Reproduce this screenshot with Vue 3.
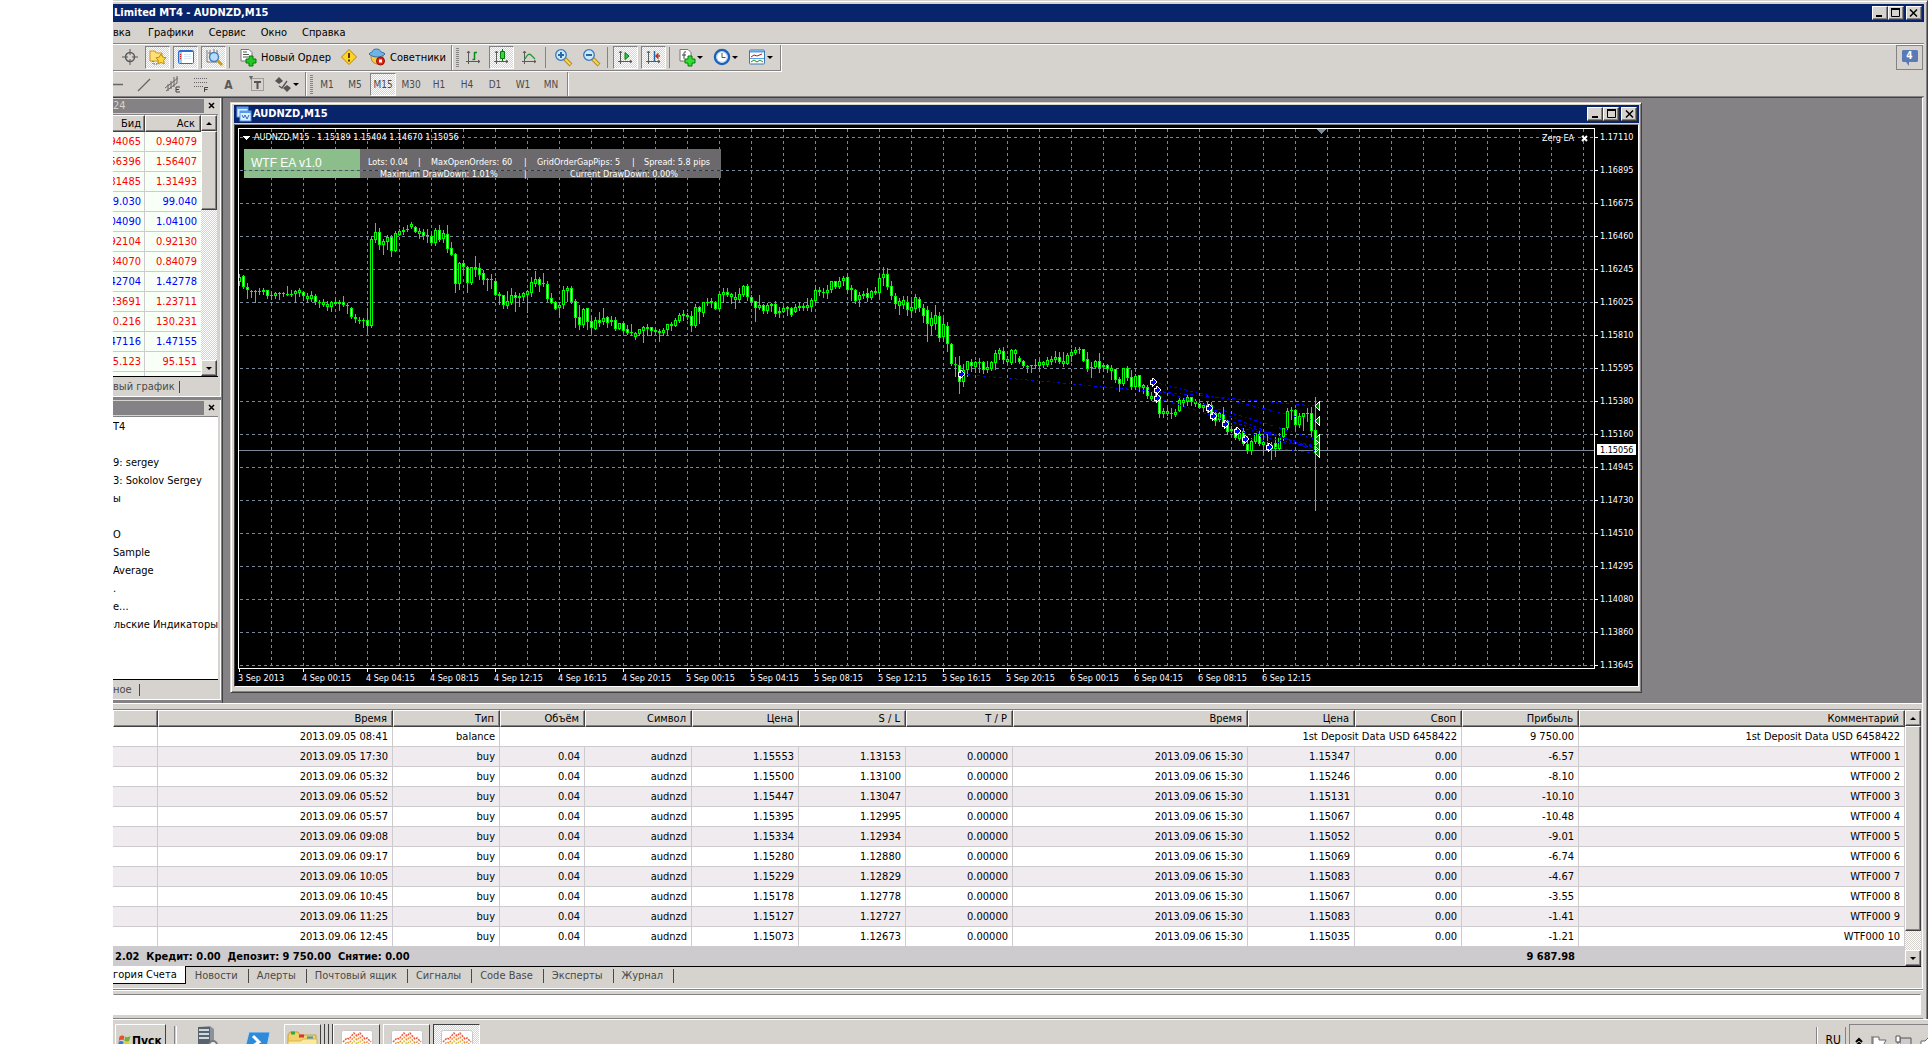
<script setup>
import { ref } from "vue"

// 16x16 toolbar glyphs
const axes = '<path d="M3.5 2v13M1 12.500h14M2 4l1.500-2L5 4M13 11l2 1.500-2 1.500" fill="none" stroke="#5a5a5a"/>'
const icons = {
  cross: '<circle cx="8" cy="8" r="4.500" fill="none" stroke="#5a5a5a" stroke-width="1.500"/><path d="M8 0v6M8 10v6M0 8h6M10 8h6" stroke="#5a5a5a"/>',
  star: '<path d="M0 2h5l1 2h6v8H0z" fill="#ffe07a" stroke="#c39a20"/><path d="M3 12v3h4" stroke="#555" fill="none" stroke-dasharray="1 1"/><path d="M11 5l1.800 3.200 3.200.6-2.300 2.500.5 3.700-3.200-1.500L7.800 15l.5-3.700L6 8.800l3.200-.6z" fill="#ffd83c" stroke="#c08a10"/>',
  panel: '<rect x=".5" y="1.500" width="15" height="13" rx="1" fill="#fff" stroke="#2a70c8"/><path d="M1 2h3v12H1z" fill="#9cc8f4"/><path d="M1 2.500h14" stroke="#2a70c8"/><path d="M2 5.500h1M2 7.500h1M2 9.500h1" stroke="#c02020"/><path d="M6 5.500h7M6 7.500h7M6 9.500h7" stroke="#d7e5f4"/>',
  search: '<path d="M1 1v12h10V1M4 1v5M8 0v5M2 4h3" fill="#f4f0e8" stroke="#777"/><circle cx="8" cy="8" r="4.500" fill="#b8ddf8" stroke="#4580bd" stroke-width="1.500"/><path d="M11.500 11.500L16 16" stroke="#c99e25" stroke-width="3"/>',
  order: '<path d="M1 .5h8l3 3V12H1z" fill="#fff" stroke="#777"/><path d="M3 3h4M3 5.500h6M3 8h5" stroke="#555"/><path d="M9 7h4v3h3v4h-3v3H9v-3H6v-4h3z" fill="#20c820" stroke="#08780c"/>',
  warn: '<path d="M8 .5L15.500 8 8 15.500.5 8z" fill="#ffd42a" stroke="#b98500"/><path d="M8 4v5M8 10.500v2" stroke="#5b3c00" stroke-width="2"/>',
  robot: '<path d="M2 6c0 5 1 8 6 9 4-1 6-4 6-9-3 2-9 2-12 0z" fill="#f5c945" stroke="#b98a15"/><path d="M0 5c1-2 3-1 3-2 1-4 8-4 9 0 1 1 3 0 4 2-3 4-12 4-16 0z" fill="#6fb4e6" stroke="#3173ad"/><circle cx="11.500" cy="12" r="4" fill="#dd2617" stroke="#8f1009"/><path d="M10 10.500h3v3h-3z" fill="#fff"/>',
  bars: axes + '<path d="M9.500 3v8M9.500 3.500H12M7.500 10.500h2" fill="none" stroke="#0a8a1a" stroke-width="1.500"/>',
  candle: axes + '<path d="M9.500 0v12" stroke="#08780c"/><path d="M7.500 2.500h4v7h-4z" fill="#30d848" stroke="#08780c"/>',
  line: axes + '<path d="M4 10c2-4 4-6 6-4l4 4" fill="none" stroke="#259a30" stroke-width="1.300"/>',
  zoomIn: '<path d="M10 10l6 6" stroke="#b48a1e" stroke-width="4"/><path d="M10 10l5.500 5.500" stroke="#f4d860" stroke-width="2"/><circle cx="6" cy="6" r="5.300" fill="#cdeafc" stroke="#3a78b8" stroke-width="1.300"/><path d="M3 6h6M6 3v6" stroke="#2b68a8" stroke-width="2"/>',
  zoomOut: '<path d="M10 10l6 6" stroke="#b48a1e" stroke-width="4"/><path d="M10 10l5.500 5.500" stroke="#f4d860" stroke-width="2"/><circle cx="6" cy="6" r="5.300" fill="#cdeafc" stroke="#3a78b8" stroke-width="1.300"/><path d="M3 6h6" stroke="#2b68a8" stroke-width="2"/>',
  scroll: axes + '<path d="M8 3.500v7L12 7z" fill="#30c840" stroke="#08780c"/>',
  shift: axes + '<path d="M9.500 2v10" stroke="#2268a8" stroke-width="1.500"/><path d="M11 7h4M13.500 4.500L11 7l2.500 2.500" fill="none" stroke="#b8341a" stroke-width="1.500"/>',
  addDoc: '<path d="M1 .5h8l3 3V12H1z" fill="#fff" stroke="#777"/><path d="M7 3c-2-1-2 1-2 2v5M3 6h4" fill="none" stroke="#444"/><path d="M9 7h4v3h3v4h-3v3H9v-3H6v-4h3z" fill="#30e030" stroke="#08780c"/>',
  clock: '<circle cx="8" cy="8" r="7" fill="#fff" stroke="#1d62b8" stroke-width="2.500"/><circle cx="8" cy="8" r="5.300" fill="none" stroke="#a6cdf0"/><path d="M8 4v4.500h3.500" fill="none" stroke="#555"/>',
  template: '<rect x=".5" y="1" width="15" height="14" rx="1" fill="#fff" stroke="#3a78b8"/><path d="M1 2.500h14" stroke="#5aa0e0" stroke-width="2"/><path d="M2 8l3-2 3 1 5-2" fill="none" stroke="#a82020"/><path d="M1 9.500h14" stroke="#5aa0e0"/><path d="M2 13l3-2 3 2 3-2 3 2" fill="none" stroke="#18902a"/>',
  hline: '<path d="M0 8.500h14" stroke="#666" stroke-width="1.500"/>',
  slash: '<path d="M1 15L13 3" stroke="#666" stroke-width="1.300"/>',
  channel: '<path d="M0 12L13 2M1 15L12 7M3 8v7M6 5v8M9 1v10M12 0v7" stroke="#666" fill="none"/><path d="M15 11h-4v5h4M11 13.500h3" stroke="#444" fill="none"/>',
  fibo: '<path d="M1 2.500h13M1 6.500h13M1 10.500h9" stroke="#666" stroke-dasharray="1 1"/><path d="M11.500 16v-4.500H15M11.500 13.500h3" stroke="#444" fill="none"/>',
  frame: '<rect x="2.500" y="2.500" width="12" height="12" fill="none" stroke="#666" stroke-dasharray="1 1"/><path d="M0 0h4L2 4z" fill="#666"/><path d="M5 6h7M8.500 6v7" stroke="#555" stroke-width="2"/>',
  arrows: '<path d="M4 1l4 4-4 3-4-3zM12 9l4 3-4 4-4-4z" fill="#555"/><path d="M4 10l3 2 5-7" fill="none" stroke="#555" stroke-width="1.300"/>',
}

const menu = ["Графики", "Сервис", "Окно", "Справка"]
const standardBar = [
  { icon: "cross" },
  { icon: "star", on: true },
  { icon: "panel", on: true },
  { icon: "search", on: true },
  { sep: true },
  { icon: "order", label: "Новый Ордер" },
  { icon: "warn" },
  { icon: "robot", label: "Советники" },
]
const chartBar = [
  { icon: "bars" },
  { icon: "candle", on: true },
  { icon: "line" },
  { sep: true },
  { icon: "zoomIn" },
  { icon: "zoomOut" },
  { sep: true },
  { icon: "scroll", on: true },
  { icon: "shift", on: true },
  { sep: true },
  { icon: "addDoc", drop: true },
  { icon: "clock", drop: true },
  { icon: "template", drop: true },
]
const drawBar = [
  { icon: "hline" }, { icon: "slash" }, { icon: "channel" }, { icon: "fibo" },
  { letter: "A" }, { icon: "frame" }, { icon: "arrows", drop: true },
]
const frames = ["M1", "M5", "M15", "M30", "H1", "H4", "D1", "W1", "MN"]
const frame = ref("M15")

// Market watch: bid, ask, direction
const quotes = [
  ["94065", "0.94079", "down"], ["56396", "1.56407", "down"], ["31485", "1.31493", "down"],
  ["9.030", "99.040", "up"], ["04090", "1.04100", "up"], ["92104", "0.92130", "down"],
  ["84070", "0.84079", "down"], ["42704", "1.42778", "up"], ["23691", "1.23711", "down"],
  ["0.216", "130.231", "down"], ["47116", "1.47155", "up"], ["5.123", "95.151", "down"],
  ["", "", "up"],
]
const navigator = ["T4", "", "9: sergey", "3: Sokolov Sergey", "ы", "", "O", "Sample", "Average", ".", "е...", "ельские Индикаторы"]

// Account history
const columns = ["", "Время", "Тип", "Объём", "Символ", "Цена", "S / L", "T / P", "Время", "Цена", "Своп", "Прибыль", "Комментарий"]
const deals = [
  { open: "2013.09.05 17:30", price: "1.15553", sl: "1.13153", close: "1.15347", profit: "-6.57", bar: 961 },
  { open: "2013.09.06 05:32", price: "1.15500", sl: "1.13100", close: "1.15246", profit: "-8.10", bar: 1153 },
  { open: "2013.09.06 05:52", price: "1.15447", sl: "1.13047", close: "1.15131", profit: "-10.10", bar: 1157 },
  { open: "2013.09.06 05:57", price: "1.15395", sl: "1.12995", close: "1.15067", profit: "-10.48", bar: 1157 },
  { open: "2013.09.06 09:08", price: "1.15334", sl: "1.12934", close: "1.15052", profit: "-9.01", bar: 1209 },
  { open: "2013.09.06 09:17", price: "1.15280", sl: "1.12880", close: "1.15069", profit: "-6.74", bar: 1213 },
  { open: "2013.09.06 10:05", price: "1.15229", sl: "1.12829", close: "1.15083", profit: "-4.67", bar: 1225 },
  { open: "2013.09.06 10:45", price: "1.15178", sl: "1.12778", close: "1.15067", profit: "-3.55", bar: 1237 },
  { open: "2013.09.06 11:25", price: "1.15127", sl: "1.12727", close: "1.15083", profit: "-1.41", bar: 1245 },
  { open: "2013.09.06 12:45", price: "1.15073", sl: "1.12673", close: "1.15035", profit: "-1.21", bar: 1269 },
]
const tabs = ["Новости", "Алерты", "Почтовый ящик", "Сигналы", "Code Base", "Эксперты", "Журнал"]
const command = ref("")

// Chart scale
const prices = ["1.17110", "1.16895", "1.16675", "1.16460", "1.16245", "1.16025", "1.15810", "1.15595", "1.15380", "1.15160", "1.14945", "1.14730", "1.14510", "1.14295", "1.14080", "1.13860", "1.13645"]
const times = ["3 Sep 2013", "4 Sep 00:15", "4 Sep 04:15", "4 Sep 08:15", "4 Sep 12:15", "4 Sep 16:15", "4 Sep 20:15", "5 Sep 00:15", "5 Sep 04:15", "5 Sep 08:15", "5 Sep 12:15", "5 Sep 16:15", "5 Sep 20:15", "6 Sep 00:15", "6 Sep 04:15", "6 Sep 08:15", "6 Sep 12:15"]
const priceY = price => Math.round(137 + (1.1711 - Number(price)) / 0.03465 * 528)

// high, body top, body bottom, low; a trailing "f" marks a falling bar
const bars = `274 277 282 285,275 276 287 288f,283 287 290 298f,290 291 291 297,290 291 291 302,288 291 292 294,288 290 292 294,290 290 296 298f,292 295 295 299,292 293 296 298
292 293 293 299,292 293 294 296,286 294 294 295,290 294 294 296,290 291 294 302,288 290 293 296,291 292 296 300f,293 296 299 302,291 295 299 301,294 296 302 304f
300 302 302 307,299 302 305 306,301 304 307 310,301 302 307 311,299 302 304 305,300 302 304 310,296 302 305 306f,303 305 306 313,307 308 317 318f,314 317 319 322
317 320 320 323,318 320 320 327,308 320 326 332f,236 239 326 327,223 232 240 242,228 232 245 249f,239 241 245 254,235 237 242 249,235 237 251 256f,231 233 251 251
229 231 235 235,227 230 232 234,225 229 229 231,222 224 227 228,226 227 232 232f,228 231 234 238,229 232 236 239f,229 235 236 242,234 236 243 245f,228 230 243 245
225 230 240 241f,230 233 239 242,225 234 249 252f,242 248 255 255f,253 254 284 292f,262 263 284 289,260 263 267 273f,266 267 283 292f,267 267 283 284,256 267 269 276
263 268 275 279f,270 273 280 284f,278 279 279 290,274 279 279 288,278 281 295 295f,292 294 296 304,295 295 305 308f,291 301 306 308,288 295 303 304,292 295 298 311f
293 296 298 306,292 293 297 300,290 291 295 312,277 282 293 296,271 279 284 286,277 279 285 291f,273 283 283 286,281 284 299 301f,293 298 303 303f,301 302 309 309f
302 305 308 317,286 290 305 308,286 288 291 301,286 288 302 303f,299 301 318 327f,305 317 325 329f,308 309 325 327,308 308 322 329f,316 321 328 333f,317 320 329 329
312 320 323 326f,308 318 322 324,316 317 323 327f,316 320 322 325,317 320 329 330f,323 323 329 329,322 323 331 333f,325 329 333 334f,324 332 333 335,332 333 337 339
329 329 334 335,326 327 331 342,324 327 329 335,327 327 331 335f,328 330 332 335,329 331 333 341,328 330 333 335,324 324 330 335,322 324 326 330,318 320 326 326
313 315 321 322,310 314 316 320,313 315 317 319,311 316 326 331f,304 307 326 327,306 307 312 323f,302 302 313 316,298 302 303 305,298 301 303 307,301 302 309 309f
294 294 309 310,288 292 295 302,288 292 295 296f,293 294 297 303,292 297 300 308,288 294 300 302,285 286 295 296,284 286 297 300f,295 297 302 305f,301 301 308 321f
295 305 308 309,304 305 311 313f,303 305 311 313,303 304 306 311,301 304 314 316f,307 311 313 317,306 308 312 312,306 307 309 315,307 308 315 316f,304 307 312 312
302 306 308 310,303 306 308 310,298 305 308 310,298 300 307 311,285 290 301 302,287 290 292 295,288 292 292 297,285 290 293 298,281 281 290 292,281 281 287 288f
277 281 287 288,276 278 281 285,274 277 290 293f,285 288 290 300,289 290 301 303f,292 295 300 306,291 294 296 298,288 293 298 301f,290 291 298 299,287 291 293 294
274 278 293 298,267 274 278 285,268 274 287 289f,281 286 296 299f,293 296 304 308f,298 301 306 314,296 300 305 308,296 302 310 315f,300 307 311 317,294 297 309 312
297 299 308 311f,304 308 316 322f,306 310 324 341f,312 318 326 335,305 315 324 329,312 316 338 341f,318 324 337 341,322 326 344 351f,343 344 364 365f,357 364 365 376
356 365 382 393f,364 370 382 386,361 361 370 376,359 362 366 371f,361 362 367 372,358 362 362 372,361 362 370 373f,361 367 370 372,361 362 369 370,350 353 363 369
348 350 354 359,347 351 360 363f,356 359 362 364,349 350 363 364,349 350 354 362,356 358 362 363f,360 361 366 367f,365 366 367 372,365 365 366 372,359 365 365 368
359 362 366 371,361 362 365 367,357 360 365 366,356 359 362 364,351 357 360 362,352 357 362 363f,352 361 364 366,353 355 364 364,349 352 356 361,347 350 353 354
347 349 349 353,349 349 361 361f,352 359 369 371f,362 367 368 377,360 361 367 368,353 361 368 372f,363 365 367 371,364 365 369 372f,365 368 371 379,369 369 380 382f
377 379 384 391f,368 368 384 385,366 368 378 380f,370 377 387 389f,374 376 387 389,375 375 387 391f,384 385 388 393,385 387 396 398f,392 396 399 400,393 396 399 401
395 396 414 417f,408 411 414 417,407 411 414 415,408 413 414 418,409 412 415 416,398 400 411 411,398 400 403 406,395 397 402 405,397 397 402 405f,399 401 404 406
401 403 408 408f,403 405 408 411,402 405 411 412,402 405 417 418f,412 413 421 425f,412 413 420 421,407 414 423 425f,420 421 432 434f,425 429 431 432,428 430 438 439f
432 433 439 440,428 431 444 445f,436 444 451 453f,438 441 451 454,433 433 442 443,431 434 444 445f,433 442 445 454,435 445 447 450,442 445 449 459,437 443 449 456f
433 437 449 449,428 428 437 440,408 411 428 429,407 410 411 419,409 410 425 430f,413 416 425 427,413 413 417 430,408 413 413 421,407 413 431 437f,397 430 453 510f`
const candles = bars.split(/[,\n]/).map((bar, i) => {
  const [high, top, bottom, low] = bar.split(" ").map(parseFloat)
  return { x: 239 + i * 4, high, top, bottom, low, falling: bar.endsWith("f") }
})
</script>

<template>
  <div class="desktop">
    <div class="window">
      <header class="title-bar">
        <h1>Limited MT4 - AUDNZD,M15</h1>
        <div class="controls">
          <button aria-label="Свернуть"><svg viewBox="0 0 12 10"><path d="M2 8h6" stroke="#000" stroke-width="2" /></svg></button>
          <button aria-label="Развернуть"><svg viewBox="0 0 12 10"><path d="M1.500 1v7.500h8V1" fill="none" stroke="#000" /><path d="M1 1h9" stroke="#000" stroke-width="2" /></svg></button>
          <button class="close" aria-label="Закрыть"><svg viewBox="0 0 12 10"><path d="M2 1.500l7 7M9 1.500l-7 7" stroke="#000" stroke-width="1.500" /></svg></button>
        </div>
      </header>

      <nav class="menu">
        <button class="edge">вка</button>
        <button v-for="item in menu" :key="item">{{ item }}</button>
      </nav>

      <div class="toolbar">
        <div class="band first">
          <template v-for="(b, i) in standardBar" :key="i">
            <i v-if="b.sep" class="sep" />
            <button v-else class="tool" :class="{ on: b.on, wide: b.label }" :aria-label="b.label || b.icon">
              <svg viewBox="0 0 16 17" class="ico" v-html="icons[b.icon]" />
              <span v-if="b.label">{{ b.label }}</span>
            </button>
          </template>
        </div>
        <div class="band">
          <i class="grip" />
          <template v-for="(b, i) in chartBar" :key="i">
            <i v-if="b.sep" class="sep" />
            <button v-else class="tool" :class="{ on: b.on, drop: b.drop }" :aria-label="b.icon">
              <svg viewBox="0 0 16 17" class="ico" v-html="icons[b.icon]" />
              <i v-if="b.drop" class="caret" />
            </button>
          </template>
        </div>
        <button class="chat" aria-label="Сообщения">
          <svg viewBox="0 0 16 16" width="16" height="16"><path d="M1 0h14l1 1v10l-1 1H7v4l-3-4H1l-1-1V1z" fill="#5a7ab5" /></svg>
          <b>4</b>
        </button>
      </div>

      <div class="toolbar second">
        <div class="band draw">
          <button v-for="(b, i) in drawBar" :key="i" class="tool" :class="{ drop: b.drop }" :aria-label="b.icon || b.letter">
            <b v-if="b.letter" class="letter">{{ b.letter }}</b>
            <svg v-else viewBox="0 0 16 17" class="ico" v-html="icons[b.icon]" />
            <i v-if="b.drop" class="caret" />
          </button>
        </div>
        <div class="band">
          <i class="grip" />
          <button
            v-for="f in frames"
            :key="f"
            class="tool frame"
            :class="{ on: f === frame }"
            @click="frame = f"
          >{{ f }}</button>
        </div>
      </div>

      <main class="workspace">
        <aside>
          <section class="dock">
            <div class="dock-title"><span>24</span><button aria-label="Закрыть"><svg viewBox="0 0 7 7"><path d="M1 1l5 5M6 1L1 6" stroke="#000" stroke-width="1.500" /></svg></button></div>
            <div class="scroll-area quotes-area">
              <table class="quotes">
                <thead><tr><th class="bid">Бид</th><th>Аск</th></tr></thead>
                <tbody>
                  <tr v-for="(q, i) in quotes" :key="i" :class="q[2]">
                    <td class="bid"><span class="cut-left">{{ q[0] }}</span></td><td>{{ q[1] }}</td>
                  </tr>
                </tbody>
              </table>
              <div class="scrollbar">
                <button aria-label="Вверх"><i class="up" /></button>
                <i class="thumb" />
                <i class="track" />
                <button aria-label="Вниз"><i class="down" /></button>
              </div>
            </div>
            <div class="dock-tabs"><button class="chart-tab">вый график</button></div>
          </section>
          <section class="dock">
            <div class="dock-title"><span /><button aria-label="Закрыть"><svg viewBox="0 0 7 7"><path d="M1 1l5 5M6 1L1 6" stroke="#000" stroke-width="1.500" /></svg></button></div>
            <ul class="navigator">
              <li v-for="(n, i) in navigator" :key="i">{{ n }}</li>
            </ul>
            <div class="dock-tabs"><button class="common-tab">ное</button></div>
          </section>
        </aside>

        <div class="mdi">
          <section class="child">
            <header class="title-bar child-title">
              <svg width="16" height="16" viewBox="0 0 16 16">
                <rect x="1" y="1" width="11" height="10" fill="#dceeff" stroke="#5a9be8" /><path d="M1 2h11" stroke="#5a9be8" stroke-width="2" />
                <rect x="4" y="5" width="11" height="10" fill="#dceeff" stroke="#5a9be8" /><path d="M4 6h11" stroke="#5a9be8" stroke-width="2" />
                <path d="M6 9l1.500 3L9 9l2 4 2-4" fill="none" stroke="#2a6ad0" />
              </svg>
              <h2>AUDNZD,M15</h2>
              <div class="controls">
                <button aria-label="Свернуть"><svg viewBox="0 0 12 10"><path d="M2 8h6" stroke="#000" stroke-width="2" /></svg></button>
                <button aria-label="Развернуть"><svg viewBox="0 0 12 10"><path d="M1.500 1v7.500h8V1" fill="none" stroke="#000" /><path d="M1 1h9" stroke="#000" stroke-width="2" /></svg></button>
                <button class="close" aria-label="Закрыть"><svg viewBox="0 0 12 10"><path d="M2 1.500l7 7M9 1.500l-7 7" stroke="#000" stroke-width="1.500" /></svg></button>
              </div>
            </header>
            <div class="chart">
              <svg width="1402" height="561" viewBox="235 125 1402 561" shape-rendering="crispEdges">
                <!-- grid -->
                <g stroke="#778899" stroke-dasharray="3 3">
                  <path v-for="n in 42" :key="'v' + n" :d="`M${239.5 + n * 32} 129V668`" />
                  <path v-for="(p, n) in prices" :key="p" :d="`M240 ${137.5 + n * 33}H1594`" />
                </g>
                <!-- EA panel, the grid row at 170 stays visible on it -->
                <path d="M244 149h116v21h-116zM244 171h116v7h-116z" fill="#8cbe8c" />
                <path d="M360 149h361v21h-361zM360 171h361v7h-361z" fill="#6b696b" />
                <path d="M244 170h116v1h-116z" fill="#8cbe8c" fill-opacity=".5" />
                <path d="M360 170h361v1h-361z" fill="#6b696b" fill-opacity=".5" />
                <path d="M238 450.500H1594" stroke="#778899" />

                <!-- candles -->
                <g v-for="c in candles" :key="c.x">
                  <rect :x="c.x" :y="c.high" width="1" :height="c.low - c.high + 1" fill="#00ff00" />
                  <rect :x="c.x - 1" :y="c.top" width="3" :height="Math.max(1, c.bottom - c.top)" fill="#00ff00" />
                  <rect
                    v-if="c.bottom - c.top > 2"
                    :x="c.x"
                    :y="c.top + 1"
                    width="1"
                    :height="c.bottom - c.top - 2"
                    :fill="c.falling ? '#fff' : '#000'"
                  />
                </g>

                <!-- deals -->
                <path
                  v-for="d in deals"
                  :key="'l' + d.open"
                  :d="`M${d.bar} ${priceY(d.price)}L1315 ${priceY(d.close)}`"
                  stroke="#0000ff"
                  stroke-dasharray="3 3 3 3 1 3"
                />
                <g v-for="d in deals" :key="'m' + d.open">
                  <path :transform="`translate(${d.bar} ${priceY(d.price)})`" d="M-3 -2h2v-2h1l4 4-4 4h-1v-2h-2z" fill="#0000ff" stroke="#fff" />
                  <path :transform="`translate(1315 ${priceY(d.close)})`" d="M0 0l4-4v8z" fill="#008000" stroke="#fff" />
                </g>

                <path d="M238.500 668.500V128.500H1594.500V668.500Z" fill="none" stroke="#fff" />
                <path d="M1316 129h10l-5 5z" fill="#778899" />
                <path d="M242 136h8l-4 4z" fill="#fff" />
                <path v-for="(t, n) in times" :key="t" :d="`M${239.5 + n * 64} 669v3`" stroke="#fff" />
                <path v-for="(p, n) in prices" :key="'t' + p" :d="`M1595 ${137.5 + n * 33}h3`" stroke="#fff" />
                <rect x="1597" y="444" width="39" height="11" fill="#fff" />

                <g class="labels">
                  <text x="254" y="140">AUDNZD,M15&#160;&#160; 1.15189 1.15404 1.14670 1.15056</text>
                  <text x="1542" y="141">Zerg EA</text>
                  <text x="251" y="167" class="ea">WTF EA v1.0</text>
                  <text x="368" y="165">Lots: 0.04</text>
                  <text x="418" y="165">|</text>
                  <text x="431" y="165">MaxOpenOrders: 60</text>
                  <text x="524" y="165">|</text>
                  <text x="537" y="165">GridOrderGapPips: 5</text>
                  <text x="632" y="165">|</text>
                  <text x="644" y="165">Spread: 5.8 pips</text>
                  <text x="380" y="177">Maximum DrawDown: 1.01%</text>
                  <text x="524" y="177">|</text>
                  <text x="570" y="177">Current DrawDown: 0.00%</text>
                  <text v-for="(t, n) in times" :key="t" :x="238 + n * 64" y="681">{{ t }}</text>
                  <text v-for="(p, n) in prices" :key="p" x="1600" :y="140 + n * 33">{{ p }}</text>
                  <text x="1600" y="453" class="now">1.15056</text>
                </g>
                <path d="M1582 136l5 5M1587 136l-5 5" stroke="#fff" stroke-width="2" shape-rendering="auto" />
              </svg>
            </div>
          </section>
        </div>
      </main>

      <section class="terminal">
        <div class="scroll-area">
          <table class="history">
            <colgroup>
              <col class="w45"><col class="w235"><col class="w107"><col class="w85"><col class="w107"><col class="w107"><col class="w107">
              <col class="w107"><col class="w235"><col class="w107"><col class="w107"><col class="w117"><col>
            </colgroup>
            <thead>
              <tr><th v-for="(c, i) in columns" :key="i">{{ c }}</th></tr>
            </thead>
            <tbody>
              <tr>
                <td /><td>2013.09.05 08:41</td><td>balance</td>
                <td colspan="8">1st Deposit Data USD 6458422</td><td>9 750.00</td><td>1st Deposit Data USD 6458422</td>
              </tr>
              <tr v-for="(d, i) in deals" :key="d.open">
                <td /><td>{{ d.open }}</td><td>buy</td><td>0.04</td><td>audnzd</td>
                <td>{{ d.price }}</td><td>{{ d.sl }}</td><td>0.00000</td><td>2013.09.06 15:30</td>
                <td>{{ d.close }}</td><td>0.00</td><td>{{ d.profit }}</td><td>WTF000 {{ i + 1 }}</td>
              </tr>
            </tbody>
            <tfoot>
              <tr><td colspan="11">2.02&#160; Кредит: 0.00&#160; Депозит: 9 750.00&#160; Снятие: 0.00</td><td>9 687.98</td><td /></tr>
            </tfoot>
          </table>
          <div class="scrollbar history-bar">
            <button aria-label="Вверх"><i class="up" /></button>
            <i class="thumb" />
            <i class="track" />
            <button aria-label="Вниз"><i class="down" /></button>
          </div>
        </div>
        <nav class="tabs">
          <button class="active">гория Счета</button>
          <button v-for="t in tabs" :key="t">{{ t }}</button>
        </nav>
      </section>

      <div class="command">
        <input v-model="command" type="text" aria-label="Команда">
      </div>
    </div>

    <footer class="taskbar">
      <button class="start">
        <svg width="20" height="20" viewBox="0 0 20 20"><path d="M2 4c3-3 5-2 7-1L8 9C5 8 4 8 1 10z" fill="#e8502a" /><path d="M10 4c3 1 5 1 8-1l-2 7c-2 1-4 1-7 0z" fill="#6cb33e" /><path d="M1 11c3-2 4-1 7 0l-1 6c-3-1-4-1-7 1z" fill="#3a7ad8" /><path d="M9 11c3 1 4 1 7 0l-2 7c-2 1-4 0-6-1z" fill="#f5c62c" /></svg>
        Пуск
      </button>
      <i class="sep" />
      <svg class="quick" width="26" height="26" viewBox="0 0 26 26"><path d="M4 1l12-1 4 3v22H4z" fill="#8a939b" /><path d="M4 1h12v24H4z" fill="#59636d" /><path d="M5 4h10M5 8h10M5 12h10" stroke="#cfd8df" stroke-width="2" /><circle cx="19" cy="19" r="4" fill="#eee" stroke="#777" stroke-width="2" /></svg>
      <svg class="quick" width="26" height="26" viewBox="0 0 26 26"><path d="M5 6h21l-4 20H0z" fill="#2f8ad8" stroke="#b5d8f4" /><path d="M9 10l6 6-9 6" fill="none" stroke="#fff" stroke-width="3" /></svg>
      <button class="task folder" aria-label="Проводник">
        <svg width="32" height="26" viewBox="0 0 32 26"><path d="M1 5l2-3h8l2 3h16v21H1z" fill="#f2d06b" stroke="#caa23c" /><path d="M4 3h4" stroke="#2ba84a" stroke-width="3" /><path d="M12 6h5" stroke="#d33" stroke-width="3" /><path d="M20 8h6" stroke="#39c" stroke-width="3" /><path d="M1 11h13l2-2h14v17H1z" fill="#fbe9a0" stroke="#d8b650" /></svg>
      </button>
      <i class="stack" /><i class="stack" /><i class="stack" />
      <button v-for="n in 3" :key="n" class="task" :class="{ on: n === 3 }" aria-label="MT4">
        <svg width="32" height="26" viewBox="0 0 32 26">
          <rect x=".5" y=".5" width="31" height="30" rx="2" fill="#fff" stroke="#c8c8c8" />
          <g fill="none" stroke-width="1.500" stroke-dasharray="2 1">
            <path d="M2 12l4-4 2 1 5-6 3 3 3-3 5 6 2-1 4 4" stroke="#f0543c" />
            <path d="M2 16l4-4 2 1 5-6 3 3 3-3 5 6 2-1 4 4" stroke="#f09038" />
            <path d="M2 20l4-4 2 1 5-6 3 3 3-3 5 6 2-1 4 4" stroke="#d8c030" />
            <path d="M2 24l4-4 2 1 5-6 3 3 3-3 5 6 2-1 4 4" stroke="#b0cc40" />
            <path d="M2 28l4-4 2 1 5-6 3 3 3-3 5 6 2-1 4 4" stroke="#6cc040" />
          </g>
        </svg>
      </button>
      <div class="tray-left"><button>RU</button></div>
      <div class="tray">
        <svg width="8" height="16" viewBox="0 0 8 16"><path d="M1 8l3-3 3 3M1 12l3-3 3 3" fill="none" stroke="#000" stroke-width="2" /></svg>
        <svg width="18" height="18" viewBox="0 0 18 18"><path d="M2 2v16M3 3h6v3h7l-2 4 2 4H8v-2H3z" fill="#fff" stroke="#666" /></svg>
        <svg width="18" height="18" viewBox="0 0 18 18"><path d="M5 4h11v9H5z" fill="#ccc" stroke="#555" /><path d="M1 2h4v6H1zM3 8v7h9" fill="#fff" stroke="#555" /></svg>
        <svg width="18" height="18" viewBox="0 0 18 18"><path d="M1 7h4l5-5v14l-5-4H1z" fill="#fff" stroke="#666" /></svg>
      </div>
    </footer>
  </div>
</template>

<style>
body {
  margin: 0;
  background: #fff;
  overflow: hidden;
}
</style>

<style scoped>
.desktop {
  margin-left: 113px;
  height: 100vh;
  overflow: hidden;
  background: #d6d3ce;
  font: 11px/14px "DejaVu Sans Condensed", "Liberation Sans", sans-serif;
  color: #000;
}

button {
  margin: 0;
  padding: 0;
  border: 0;
  background: none;
  font: inherit;
  color: inherit;
  white-space: nowrap;
}

.window {
  border-top: 1px solid #d6d3ce;
  border-right: 1px solid #424142;
  padding-right: 3px;
  box-shadow: inset 0 1px #fff, inset -1px 0 #848284;
  padding-top: 3px;
}

/* title bars */
.title-bar {
  display: flex;
  align-items: center;
  height: 18px;
  background: #08246b;
  color: #fff;
}

h1,
h2 {
  flex: 1;
  margin: 0 0 0 1px;
  font-size: 11px;
  line-height: 18px;
}

.controls {
  display: flex;
  padding-right: 2px;
}

.controls button {
  width: 16px;
  height: 14px;
  border: 1px solid;
  border-color: #fff #424142 #424142 #fff;
  box-shadow: inset -1px -1px #848284;
  background: #d6d3ce;
  box-sizing: border-box;
}

.controls svg {
  display: block;
  width: 12px;
  height: 10px;
  margin: 1px;
}

.controls .close {
  margin-left: 2px;
}

/* menu */
.menu {
  display: flex;
  gap: 15px;
  height: 21px;
  border-bottom: 1px solid #848284;
  box-shadow: 0 1px #fff;
  margin-bottom: 1px;
}

.menu .edge {
  width: 20px;
  text-align: left;
}

.cut-left,
.navigator li:last-child {
  display: flex;
  justify-content: flex-end;
  align-items: center;
  overflow: hidden;
}

/* toolbars */
.toolbar {
  display: flex;
  height: 27px;
  align-items: flex-start;
}

.band {
  display: flex;
  align-items: center;
  height: 25px;
  padding-right: 2px;
  border-right: 1px solid #848284;
  border-bottom: 1px solid #848284;
  box-shadow: 1px 1px #fff;
}

.band.first {
  padding-left: 2px;
}

.second {
  height: 24px;
  overflow: hidden;
  border-bottom: 1px solid #848284;
}

.draw {
  margin-left: -11px;
}

.tool {
  display: flex;
  align-items: center;
  justify-content: center;
  width: 25px;
  height: 23px;
  margin: 0 1px 0 2px;
  box-sizing: border-box;
  border: 1px solid transparent;
}

.on {
  border-color: #848284 #fff #fff #848284;
  background: repeating-conic-gradient(#fff 0 25%, #d6d3ce 0 50%) 0 0 / 2px 2px;
}

.tool.wide {
  width: auto;
  padding: 0 1px 0 4px;
  gap: 5px;
}

.tool.drop {
  width: 32px;
  gap: 2px;
}

.draw .drop {
  width: 30px;
}

.tool.frame {
  width: 26px;
  margin: 0 1px;
  color: #4a494a;
  font-size: 10px;
}

.ico {
  width: 16px;
  height: 17px;
  flex: none;
  overflow: visible;
}

.letter {
  color: #5a595a;
  font-size: 12px;
}

.sep {
  width: 1px;
  height: 21px;
  margin: 0 2px;
  border-left: 1px solid #848284;
}

.grip {
  width: 3px;
  height: 19px;
  margin: 0 0 0 4px;
  background: repeating-linear-gradient(#848284 0 1px, #d6d3ce 1px 2px);
}

.caret,
.up,
.down {
  width: 0;
  border: 3px solid transparent;
  border-top-color: #000;
  border-bottom: 0;
}

.up {
  border-top: 0;
  border-bottom: 3px solid #000;
}

.chat {
  position: relative;
  width: 27px;
  height: 25px;
  margin: 0 1px 0 auto;
  border: 1px solid #848284;
}

.chat svg {
  display: block;
  margin: 4px auto;
}

.chat b {
  position: absolute;
  inset: 3px 0 auto;
  color: #fff;
  font-size: 10px;
}

/* workspace */
.workspace {
  display: flex;
  border-top: 1px solid #424142;
  margin-right: 1px;
  border-right: 1px solid #fff;
}

aside {
  width: 108px;
  flex: none;
  padding-right: 1px;
  border-right: 1px solid #424142;
  background: #848284;
}

.dock {
  padding: 1px 3px 0 0;
  background: #d6d3ce;
  border-bottom: 1px solid #848284;
  margin-bottom: 2px;
  box-shadow: inset -1px -1px #fff;
}

.dock-title {
  display: flex;
  height: 14px;
  padding-bottom: 1px;
  border-bottom: 1px solid #848284;
}

.dock-title span {
  flex: 1;
  background: #848284;
  color: #d6d3ce;
}

.dock-title button {
  width: 14px;
}

.dock-title svg {
  width: 7px;
  height: 7px;
}

.scroll-area {
  display: flex;
  border-bottom: 1px solid #000;
}

.quotes-area {
  height: 261px;
  overflow: hidden;
}

table {
  border-collapse: separate;
  border-spacing: 0;
  table-layout: fixed;
}

th {
  height: 17px;
  box-sizing: border-box;
  padding: 0 5px 0 0;
  border: 1px solid;
  border-color: #fff #424142 #424142 #fff;
  box-shadow: inset -1px -1px #848284;
  background: #d6d3ce;
  font-weight: normal;
  line-height: 14px;
  text-align: right;
}

td {
  height: 20px;
  box-sizing: border-box;
  padding: 0 4px;
  border-right: 1px solid #cecbce;
  border-bottom: 1px solid #cecbce;
  line-height: 18px;
  text-align: right;
  white-space: nowrap;
}

.quotes {
  width: 88px;
  flex: none;
}

.quotes .bid {
  width: 32px;
  padding-left: 0;
  padding-right: 3px;
  border-left: 0;
}

.quotes td {
  background: #f7fff7;
}

.quotes td:last-child {
  border-right: 0;
}

.quotes .down td {
  color: #f00;
}

.quotes .up td {
  color: #00f;
}

.scrollbar {
  display: flex;
  flex-direction: column;
  width: 16px;
  flex: none;
}

.scrollbar button {
  display: grid;
  place-items: center;
  height: 16px;
  flex: none;
}

.scrollbar button,
.thumb {
  border: 1px solid;
  border-color: #fff #424142 #424142 #fff;
  box-shadow: inset -1px -1px #848284;
  background: #d6d3ce;
  box-sizing: border-box;
}

.thumb {
  height: 79px;
}

.track {
  flex: 1;
  background: repeating-conic-gradient(#fff 0 25%, #d6d3ce 0 50%) 0 0 / 2px 2px;
}

.dock-tabs {
  display: flex;
  height: 20px;
  align-items: center;
  color: #4a494a;
}

.dock-tabs button {
  border-right: 1px solid #4a494a;
  line-height: 12px;
  text-align: left;
}

.chart-tab {
  width: 67px;
}

.common-tab {
  width: 27px;
}

.navigator {
  height: 263px;
  margin: 0;
  padding: 1px 0 0;
  box-sizing: border-box;
  border-bottom: 1px solid #000;
  background: #fff;
  list-style: none;
  overflow: hidden;
}

.navigator li {
  height: 18px;
  line-height: 18px;
  white-space: nowrap;
}

.mdi {
  display: flex;
  flex: 1;
  background: #848284;
}

.child {
  flex: 1;
  margin: 4px 280px 10px 7px;
  padding: 2px 2px 3px 3px;
  border: 1px solid;
  border-color: #d6d3ce #424142 #424142 #d6d3ce;
  box-shadow: inset 1px 1px #fff, inset -1px -1px #848284;
  background: #d6d3ce;
}

.child-title svg:first-child {
  margin-left: 2px;
}

.chart {
  margin-top: 1px;
  border: 1px solid;
  border-color: #848284 #fff #fff #424142;
  background: #000;
  overflow: hidden;
}

.chart svg {
  display: block;
}

.labels {
  fill: #fff;
  font-size: 9px;
}

.labels .ea {
  font: 12px "Liberation Sans", sans-serif;
}

.labels .now {
  fill: #000;
}

/* terminal */
.terminal {
  margin-right: 1px;
  padding: 5px 2px 4px 0;
  border-top: 1px solid #fff;
  border-bottom: 1px solid #848284;
  box-shadow: inset -1px -1px #fff;
}

.terminal .scroll-area {
  border-top: 1px solid #848284;
}

.history {
  flex: 1;
  width: 0;
}

.history tbody tr:nth-child(even) {
  background: #efebef;
}

.history tbody tr:nth-child(odd) {
  background: #fff;
}

.history tfoot td {
  height: 19px;
  border: 0;
  background: #cecbce;
  font-weight: bold;
}

.history tfoot td:first-child {
  padding-left: 2px;
  text-align: left;
}

.w45 { width: 45px; }
.w85 { width: 85px; }
.w107 { width: 107px; }
.w117 { width: 117px; }
.w235 { width: 235px; }

.history-bar .thumb {
  height: 205px;
}

.tabs {
  display: flex;
  height: 18px;
  color: #4a494a;
}

.tabs button {
  height: 14px;
  margin-top: 2px;
  padding: 0 10px 0 8px;
  border-right: 1px solid #4a494a;
  line-height: 14px;
}

.tabs .active {
  height: 18px;
  margin: -1px 1px 0 0;
  padding: 0 8px 0 0;
  border-right: 1px solid #000;
  border-bottom: 1px solid #000;
  background: #fff;
  color: #000;
}

.command {
  margin-right: 1px;
  padding: 3px 2px 3px 0;
  border-top: 1px solid #fff;
  border-bottom: 1px solid #848284;
}

.command input {
  display: block;
  width: 100%;
  height: 21px;
  padding: 0;
  border: 1px solid;
  border-color: #848284 #fff #fff #fff;
  box-sizing: border-box;
  background: #fff;
  font: inherit;
}

/* taskbar */
.taskbar {
  display: flex;
  height: 40px;
  padding: 4px 0 0 2px;
  border-top: 1px solid #fff;
  box-sizing: border-box;
}

.start {
  display: flex;
  align-items: center;
  width: 51px;
  height: 34px;
  padding-left: 2px;
  box-sizing: border-box;
  border: 1px solid;
  border-color: #fff #424142 #424142 #fff;
  font-size: 12px;
  font-weight: bold;
}

.start svg {
  width: 14px;
  height: 16px;
  flex: none;
}

.taskbar .sep {
  margin: 2px 5px 0 8px;
  border-right: 1px solid #fff;
}

.quick {
  margin: 2px 12px;
}

.task {
  width: 47px;
  height: 34px;
  margin-right: 3px;
  border: 1px solid;
  border-color: #fff #424142 #424142 #fff;
  box-sizing: border-box;
}

.task svg {
  display: block;
  margin: 3px auto 0;
}

.task.on {
  border-color: #424142 #fff #fff #424142;
}

.folder {
  width: 37px;
  margin: 0 0 0 2px;
}

.stack {
  width: 3px;
  border-right: 1px solid #424142;
}

.tray-left {
  margin: 3px 3px 0 auto;
  padding: 6px 4px 0 9px;
  border-left: 1px solid #848284;
  border-right: 1px solid #848284;
  box-shadow: inset 1px 0 #fff;
}

.tray-left button {
  font-size: 12px;
}

.tray {
  display: flex;
  gap: 7px;
  width: 79px;
  padding: 9px 0 0 5px;
  box-sizing: border-box;
  overflow: hidden;
  border-left: 1px solid #848284;
  border-top: 1px solid #848284;
}

.tray svg {
  flex: none;
}
</style>
